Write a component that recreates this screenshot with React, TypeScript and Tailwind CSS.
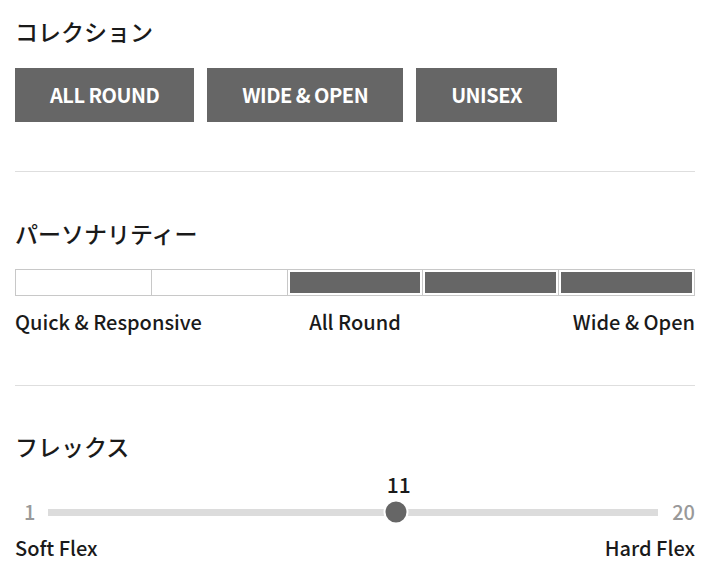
import React from "react";

const font = { fontFamily: '"Noto Sans CJK JP", "Noto Sans", sans-serif' };

const collections = ["ALL ROUND", "WIDE & OPEN", "UNISEX"];
const personality = [false, false, true, true, true];

function SectionTitle({ children }: { children: React.ReactNode }) {
  return <h2 className="text-[23px] leading-[32px] font-medium text-[#1a1a1a]">{children}</h2>;
}

function FlexSlider({ value, min, max }: { value: number; min: number; max: number }) {
  // thumb sits a bit right of the linear position in the reference
  const pct = 57;
  return (
    <div>
      <div className="relative h-[28px] ml-[33px] mr-[35px]">
        <span
          className="absolute top-0 -translate-x-1/2 text-[21px] leading-[28px] font-medium text-[#1a1a1a]"
          style={{ left: `calc(${pct}% + 2px)` }}
        >
          {value}
        </span>
      </div>
      <div className="flex items-center h-[24px] mt-[2px]">
        <span className="w-[33px] pl-[9px] text-[20px] font-medium text-[#999]">{min}</span>
        <div className="relative flex-1 h-[7px] bg-[#dcdcdc]">
          <div
            className="absolute top-1/2 -translate-x-1/2 -translate-y-1/2 w-[21px] h-[21px] rounded-full bg-[#666] border-2 border-white box-content"
            style={{ left: `${pct}%` }}
          />
        </div>
        <span className="w-[37px] text-right text-[20px] font-medium text-[#999]">{max}</span>
      </div>
      <div className="flex justify-between text-[20px] leading-[28px] font-medium text-[#1a1a1a] mt-[10px]">
        <span>Soft Flex</span>
        <span>Hard Flex</span>
      </div>
    </div>
  );
}

export default function App() {
  return (
    <div className="w-[710px] h-[586px] bg-white px-[15px] pt-[15px]" style={font}>
      <section>
        <SectionTitle>コレクション</SectionTitle>
        <div className="flex gap-[13px] mt-[21px]">
          {collections.map((c) => (
            <button
              key={c}
              className="h-[54px] px-[35px] bg-[#666] text-white text-[20px] font-bold tracking-tight"
            >
              {c}
            </button>
          ))}
        </div>
      </section>

      <hr className="border-0 h-px bg-[#dedede] mt-[49px]" />

      <section className="mt-[45px]">
        <SectionTitle>パーソナリティー</SectionTitle>
        <div className="flex mt-[20px] h-[27px]">
          {personality.map((on, i) => (
            <div key={i} className="flex-1 border border-[#c8c8c8] p-[2px] -ml-px first:ml-0">
              {on && <div className="h-full bg-[#666]" />}
            </div>
          ))}
        </div>
        <div className="grid grid-cols-3 mt-[12px] text-[20px] leading-[28px] font-medium text-[#1a1a1a]">
          <span>Quick &amp; Responsive</span>
          <span className="text-center">All Round</span>
          <span className="text-right">Wide &amp; Open</span>
        </div>
      </section>

      <hr className="border-0 h-px bg-[#dedede] mt-[49px]" />

      <section className="mt-[44px]">
        <SectionTitle>フレックス</SectionTitle>
        <div className="mt-[8px]">
          <FlexSlider value={11} min={1} max={20} />
        </div>
      </section>
    </div>
  );
}
